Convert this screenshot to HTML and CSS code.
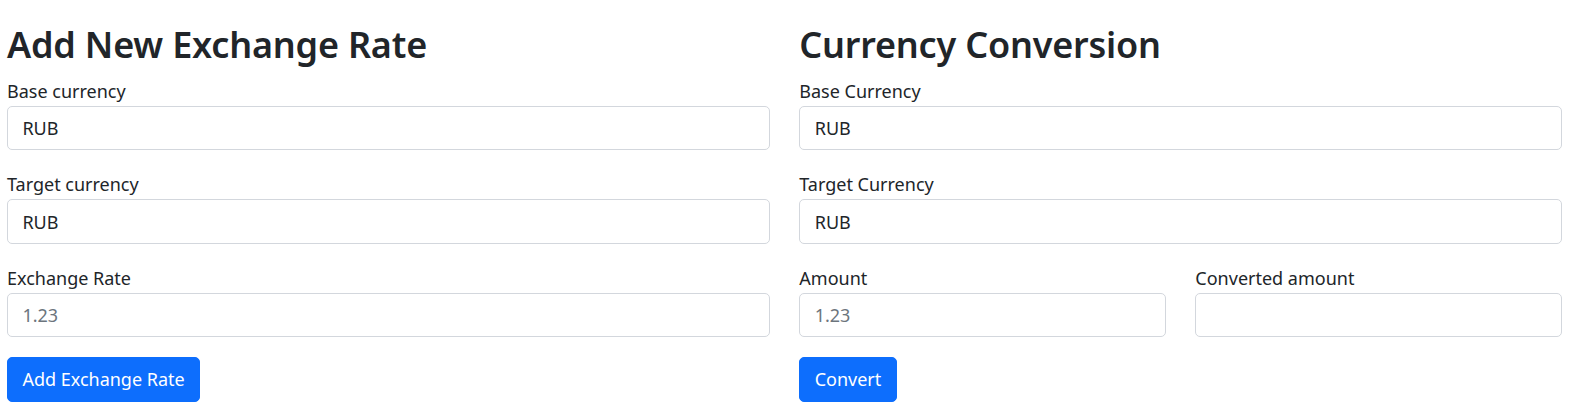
FILE: index.html
```html
<!DOCTYPE html>
<html lang="en">
<head>
<meta charset="utf-8">
<title>Exchange Rates</title>
<link rel="stylesheet" href="styles.css">
</head>
<body>
<div class="page">
  <section class="col">
    <h2 class="title">Add New Exchange Rate</h2>
    <div class="field">
      <label class="label" for="base">Base currency</label>
      <input class="control" id="base" type="text" value="RUB">
    </div>
    <div class="field">
      <label class="label" for="target">Target currency</label>
      <input class="control" id="target" type="text" value="RUB">
    </div>
    <div class="field">
      <label class="label" for="rate">Exchange Rate</label>
      <input class="control" id="rate" type="text" placeholder="1.23">
    </div>
    <button class="btn" type="button">Add Exchange Rate</button>
  </section>
  <section class="col">
    <h2 class="title">Currency Conversion</h2>
    <div class="field">
      <label class="label" for="cbase">Base Currency</label>
      <input class="control" id="cbase" type="text" value="RUB">
    </div>
    <div class="field">
      <label class="label" for="ctarget">Target Currency</label>
      <input class="control" id="ctarget" type="text" value="RUB">
    </div>
    <div class="pair">
      <div class="field">
        <label class="label" for="amount">Amount</label>
        <input class="control" id="amount" type="text" placeholder="1.23">
      </div>
      <div class="field">
        <label class="label" for="converted">Converted amount</label>
        <input class="control" id="converted" type="text">
      </div>
    </div>
    <button class="btn" type="button">Convert</button>
  </section>
</div>
</body>
</html>
```

FILE: styles.css
```css
* { box-sizing: border-box; }
html, body { margin: 0; padding: 0; background: #fff; }
body {
  font-family: "Noto Sans", "Open Sans", sans-serif;
  font-size: 18px;
  line-height: 28.8px;
  color: #212529;
}
.page {
  display: grid;
  grid-template-columns: 762.5px 762.5px;
  column-gap: 29.8px;
  padding: 21.5px 0 0 7px;
}
.col { display: flex; flex-direction: column; align-items: flex-start; }
.title {
  margin: 0 0 9.6px;
  font-size: 36px;
  line-height: 46.08px;
  font-weight: 600;
  letter-spacing: -0.2px;
}
.field { display: flex; flex-direction: column; width: 100%; margin-bottom: 20px; }
.label { display: block; line-height: 28.8px; }
.control {
  display: block;
  width: 100%;
  height: 44.5px;
  padding: 0 14.4px;
  font: inherit;
  color: #212529;
  background: #fff;
  border: 1px solid #d3d7dd;
  border-radius: 5px;
  outline: none;
}
.control::placeholder { color: #6c757d; opacity: 1; }
.pair {
  display: grid;
  grid-template-columns: 1fr 1fr;
  column-gap: 29.6px;
  width: 100%;
}
.btn {
  height: 44.7px;
  padding: 0 14.4px;
  font: inherit;
  color: #fff;
  background: #0d6efd;
  border: 1px solid #0d6efd;
  border-radius: 5px;
  cursor: pointer;
}
```
